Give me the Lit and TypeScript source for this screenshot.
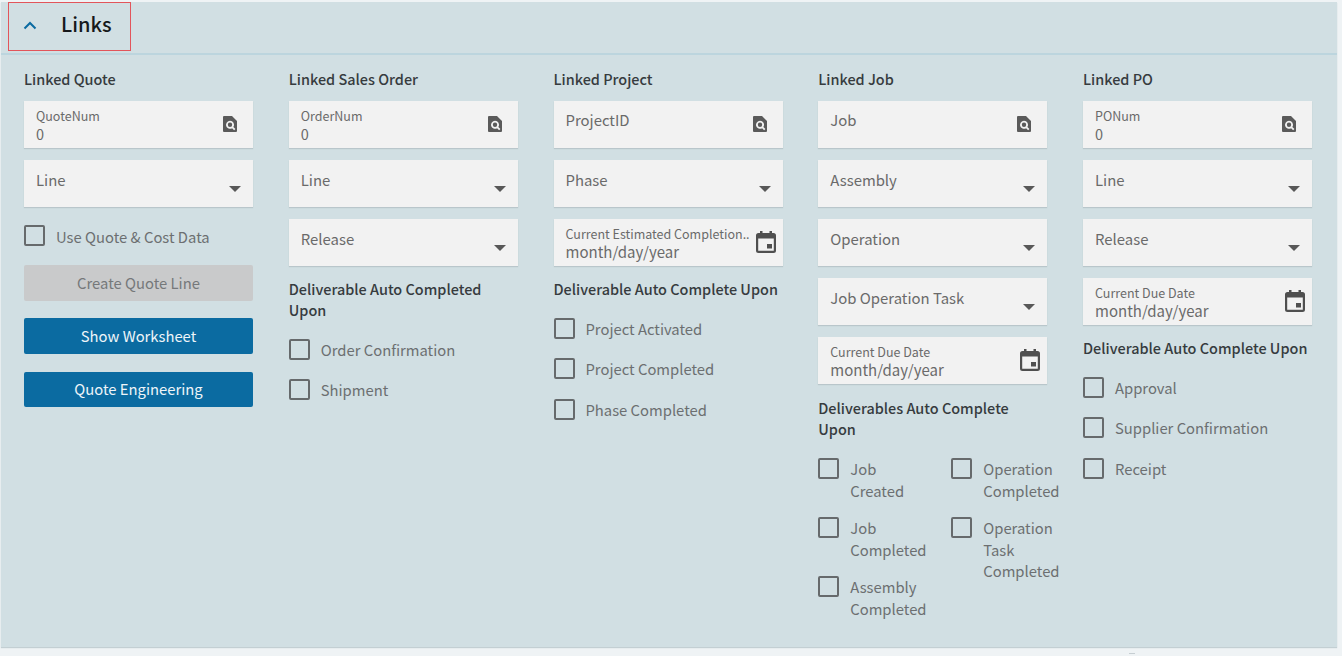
import { LitElement, html, css, svg } from "lit";
import { customElement } from "lit/decorators.js";

const lookup = svg`<svg class="ico" width="16" height="18" viewBox="0 0 16 18"><path fill="#5a5a5a" fill-rule="evenodd" d="M2 1h8l5 5v10a1 1 0 0 1-1 1H2a1 1 0 0 1-1-1V2a1 1 0 0 1 1-1zM8 5.800a4 4 0 1 0 2.100 7.400l2 2 1.300-1.300-2-2A4 4 0 0 0 8 5.800zm0 1.800a2.200 2.200 0 1 1 0 4.400 2.200 2.200 0 0 1 0-4.400z"/></svg>`;
const calendar = svg`<svg class="ico" width="22" height="24" viewBox="0 0 22 24"><path fill="#4f4f4f" fill-rule="evenodd" d="M5 1h2.5v2h7V1H17v2h1.500A2.500 2.500 0 0 1 21 5.500v15a2.500 2.500 0 0 1-2.500 2.500h-15A2.500 2.500 0 0 1 1 20.500v-15A2.500 2.500 0 0 1 3.500 3H5zM3.200 8.500v12c0 .2.100.3.300.3h15c.2 0 .3-.1.300-.3v-12zM12 14h5v4.500h-5z"/></svg>`;

type F =
  | { k: "lookup"; label: string; value?: string }
  | { k: "select"; label: string }
  | { k: "date"; label: string };

type Col = { title: string; fields: F[] };

@customElement("app-field")
class AppField extends LitElement {
  static properties = { data: { attribute: false } };
  data!: F;
  static styles = css`
    :host { display: block; }
    .f { position: relative; height: 47px; background: #f2f2f2; box-shadow: 0 1px 1px #b9c6cb; color: #6a6a6a; }
    .plain { position: absolute; left: 12px; top: 8px; font-size: 14.9px; line-height: 22px; }
    .plain.sel { top: 9px; }
    .sm { position: absolute; left: 12px; top: 7px; font-size: 12.5px; line-height: 15px; white-space: nowrap; }
    .val { position: absolute; left: 12px; top: 23px; font-size: 14.5px; line-height: 19px; }
    .date { font-size: 15px; }
    .lk { position: absolute; right: 15px; top: 14px; display: flex; }
    .cal { position: absolute; right: 6px; top: 11px; display: flex; }
    .car { position: absolute; right: 12px; top: 26px; width: 0; height: 0; border-left: 6px solid transparent; border-right: 6px solid transparent; border-top: 6px solid #585858; }
  `;
  render() {
    const d = this.data;
    if (d.k === "select")
      return html`<div class="f"><span class="plain sel">${d.label}</span><span class="car"></span></div>`;
    if (d.k === "date")
      return html`<div class="f"><span class="sm">${d.label}</span><span class="val date">month/day/year</span><span class="cal">${calendar}</span></div>`;
    return html`<div class="f">
      ${d.value !== undefined
        ? html`<span class="sm">${d.label}</span><span class="val">${d.value}</span>`
        : html`<span class="plain">${d.label}</span>`}
      <span class="lk">${lookup}</span>
    </div>`;
  }
}

@customElement("app-root")
class AppRoot extends LitElement {
  static styles = css`
    :host { display: block; position: relative; width: 1342px; height: 656px; overflow: hidden; background: #eff3f5; font-family: "Noto Sans CJK SC", "Noto Sans", sans-serif; box-sizing: border-box; padding: 2px 5px 9px 1px; }
    .panel { height: 100%; background: #d1dfe3; box-shadow: 0 1px 1px #c3cfd3; display: flex; flex-direction: column; }
    .head { height: 51px; border-bottom: 2px solid #bcd5de; flex: none; box-sizing: content-box; }
    .tab { width: 123px; height: 49px; margin-left: 7px; box-sizing: border-box; border: 1.5px solid #e2555b; display: flex; align-items: center; padding-left: 14px; gap: 24px; }
    .tab svg { position: relative; top: -1.5px; }
    .tab span { font-size: 20px; font-weight: 500; color: #16191b; position: relative; top: -3.5px; }
    .cols { display: grid; grid-template-columns: repeat(5, 229px); column-gap: 35.75px; padding: 13px 0 0 23px; }
    .col { display: flex; flex-direction: column; }
    h3 { margin: 0; font-size: 14.45px; line-height: 21px; font-weight: 500; color: #363b3e; }
    .title { margin-bottom: 12px; }
    .fields { display: flex; flex-direction: column; gap: 12px; }
    .group { margin-top: 12px; }
    .group.j { margin-top: 13px; }
    .checks { display: flex; flex-direction: column; gap: 19px; margin-top: 18.5px; }
    .chk { display: flex; align-items: flex-start; gap: 11px; font-size: 14.8px; line-height: 21.5px; color: #6c6f71; }
    .box { flex: none; width: 21px; height: 21px; box-sizing: border-box; border: 2px solid #666a6c; border-radius: 2px; }
    .grid { display: grid; grid-template-columns: 133px 96px; margin-top: 19px; }
    .gcol { display: flex; flex-direction: column; gap: 16px; }
    .btn { box-sizing: border-box; height: 36px; padding-bottom: 2px; border-radius: 2px; display: flex; align-items: center; justify-content: center; font-size: 14.8px; }
    .btn.pri { background: #0b6ba1; color: #eef5f9; }
    .btn.dis { background: #c9cacb; color: #75787a; }
    .q { margin-top: 18px; display: flex; flex-direction: column; }
    .q .chk { height: 21.5px; margin-bottom: 18.5px; }
    .q .chk span:last-child { padding-top: 1px; }
    .q .dis { margin-bottom: 17px; }
    .q .b1 { margin-bottom: 18px; }
    .q .b3 { height: 35px; }
    .mark { position: absolute; left: 1129px; top: 653px; width: 6px; height: 1px; background: #c6ced2; }
  `;

  private cols: Col[] = [
    { title: "Linked Quote", fields: [{ k: "lookup", label: "QuoteNum", value: "0" }, { k: "select", label: "Line" }] },
    { title: "Linked Sales Order", fields: [{ k: "lookup", label: "OrderNum", value: "0" }, { k: "select", label: "Line" }, { k: "select", label: "Release" }] },
    { title: "Linked Project", fields: [{ k: "lookup", label: "ProjectID" }, { k: "select", label: "Phase" }, { k: "date", label: "Current Estimated Completion.." }] },
    { title: "Linked Job", fields: [{ k: "lookup", label: "Job" }, { k: "select", label: "Assembly" }, { k: "select", label: "Operation" }, { k: "select", label: "Job Operation Task" }, { k: "date", label: "Current Due Date" }] },
    { title: "Linked PO", fields: [{ k: "lookup", label: "PONum", value: "0" }, { k: "select", label: "Line" }, { k: "select", label: "Release" }, { k: "date", label: "Current Due Date" }] },
  ];

  private check(label: unknown) {
    return html`<div class="chk"><span class="box"></span><span>${label}</span></div>`;
  }

  private fields(c: Col) {
    return html`<h3 class="title">${c.title}</h3>
      <div class="fields">${c.fields.map((f) => html`<app-field .data=${f}></app-field>`)}</div>`;
  }

  private group(title: string, items: string[]) {
    return html`<h3 class="group">${title}</h3>
      <div class="checks">${items.map((i) => this.check(i))}</div>`;
  }

  render() {
    const [q, s, p, j, po] = this.cols;
    return html`<div class="panel">
      <div class="head">
        <div class="tab">
          <svg width="14" height="9" viewBox="0 0 14 9"><path d="M1.5 7.5 7 2l5.500 5.500" fill="none" stroke="#0b6ba1" stroke-width="2"/></svg>
          <span>Links</span>
        </div>
      </div>
      <div class="cols">
        <div class="col">
          ${this.fields(q)}
          <div class="q">
            ${this.check("Use Quote & Cost Data")}
            <div class="btn dis">Create Quote Line</div>
            <div class="btn pri b1">Show Worksheet</div>
            <div class="btn pri b3">Quote Engineering</div>
          </div>
        </div>
        <div class="col">
          ${this.fields(s)}
          ${this.group("Deliverable Auto Completed Upon", ["Order Confirmation", "Shipment"])}
        </div>
        <div class="col">
          ${this.fields(p)}
          ${this.group("Deliverable Auto Complete Upon", ["Project Activated", "Project Completed", "Phase Completed"])}
        </div>
        <div class="col">
          ${this.fields(j)}
          <h3 class="group j">Deliverables Auto Complete Upon</h3>
          <div class="grid">
            <div class="gcol">
              ${this.check(html`Job<br />Created`)}
              ${this.check(html`Job<br />Completed`)}
              ${this.check(html`Assembly<br />Completed`)}
            </div>
            <div class="gcol">
              ${this.check(html`Operation<br />Completed`)}
              ${this.check(html`Operation<br />Task<br />Completed`)}
            </div>
          </div>
        </div>
        <div class="col">
          ${this.fields(po)}
          ${this.group("Deliverable Auto Complete Upon", ["Approval", "Supplier Confirmation", "Receipt"])}
        </div>
      </div>
    </div>
    <div class="mark"></div>`;
  }
}
void AppField; void AppRoot;
